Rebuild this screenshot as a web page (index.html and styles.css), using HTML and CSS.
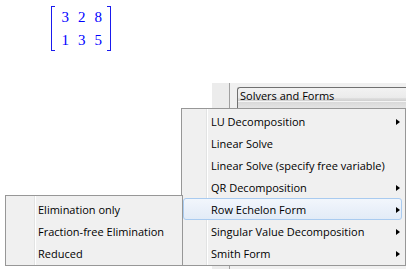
FILE: index.html
```html
<!DOCTYPE html>
<html>
<head>
<meta charset="utf-8">
<link rel="stylesheet" href="styles.css">
</head>
<body>
<div class="app">
  <div class="doc">
    <div class="matrix">
      <div class="bracket bracket-l"></div>
      <div class="cells">
        <span>3</span><span>2</span><span>8</span>
        <span>1</span><span>3</span><span>5</span>
      </div>
      <div class="bracket bracket-r"></div>
    </div>
  </div>
  <div class="panel">
    <div class="panel-strip"></div>
    <div class="panel-body">
      <div class="combo"><div class="combo-label">Solvers and Forms</div></div>
    </div>
  </div>

  <div class="menu main-menu">
    <div class="item has-sub">LU Decomposition<span class="arrow"></span></div>
    <div class="item">Linear Solve</div>
    <div class="item">Linear Solve (specify free variable)</div>
    <div class="item has-sub">QR Decomposition<span class="arrow"></span></div>
    <div class="item has-sub active">Row Echelon Form<span class="arrow"></span></div>
    <div class="item has-sub">Singular Value Decomposition<span class="arrow"></span></div>
    <div class="item has-sub">Smith Form<span class="arrow"></span></div>
  </div>

  <div class="menu sub-menu">
    <div class="item">Elimination only</div>
    <div class="item">Fraction-free Elimination</div>
    <div class="item">Reduced</div>
  </div>
</div>
</body>
</html>
```

FILE: styles.css
```css
html, body {
  margin: 0;
  padding: 0;
  background: #fff;
}

.app {
  position: relative;
  width: 406px;
  height: 269px;
  overflow: hidden;
  display: grid;
  grid-template-columns: 212px 1fr;
  grid-template-rows: 83px 1fr;
  background: #fff;
  font-family: "Open Sans", "Noto Sans", sans-serif;
  font-size: 11px;
  color: #000;
}

/* ---------- document / matrix ---------- */
.doc {
  grid-column: 1;
  grid-row: 1;
  padding: 6px 0 0 51px;
}

.matrix {
  display: flex;
  align-items: stretch;
  color: #0000ff;
  font-family: "Liberation Serif", "Times New Roman", serif;
  font-size: 15px;
}

.bracket {
  width: 3px;
  border: 1px solid #1a1aee;
}
.bracket-l { border-right: 0; }
.bracket-r { border-left: 0; }

.cells {
  display: grid;
  grid-template-columns: repeat(3, 16.5px);
  grid-template-rows: repeat(2, 22.5px);
  line-height: 22.5px;
  justify-items: center;
  margin-left: 2px;
}

/* ---------- right panel ---------- */
.panel {
  grid-column: 2;
  grid-row: 2;
  display: flex;
  background: #f0f0f0;
}
.panel-strip {
  width: 17px;
  border-right: 1px solid #a0a0a0;
  background: #ececec;
}
.panel-body {
  flex: 1;
  padding: 4px 0 0 7px;
}
.combo {
  height: 21px;
  border: 1px solid #707070;
  border-right: 0;
  border-bottom: 0;
  border-radius: 3px 0 0 0;
  background: linear-gradient(#f2f2f2 0, #ebebeb 45%, #dddddd 50%, #cfcfcf 62%, #f4f4f4 63%, #f4f4f4 67%, #d9d9d9 68%, #e6e6e6 100%);
}
.combo-label {
  line-height: 16px;
  padding-left: 2px;
}

/* ---------- menus ---------- */
.menu {
  position: absolute;
  box-sizing: border-box;
  border: 1px solid #979797;
  background-color: #f0f0f0;
  display: flex;
  flex-direction: column;
}

.main-menu {
  left: 181px;
  top: 108px;
  width: 225px;
  height: 158px;
  padding: 1px 3px 2px 1px;
  background-image: linear-gradient(to right, transparent 24px, #e2e3e3 24px, #e2e3e3 25px, #ffffff 25px, #ffffff 26px, transparent 26px);
}

.sub-menu {
  left: 5px;
  top: 195px;
  width: 178px;
  height: 71px;
  padding: 2px 2px 1px 2px;
  background-image: linear-gradient(to right, transparent 28px, #e2e3e3 28px, #e2e3e3 29px, #ffffff 29px, #ffffff 30px, transparent 30px);
}

.item {
  box-sizing: border-box;
  height: 22px;
  line-height: 20px;
  padding-top: 1px;
  display: flex;
  align-items: center;
  white-space: nowrap;
  border: 1px solid transparent;
  border-radius: 3px;
}

.main-menu .item {
  padding-left: 27px;
  padding-right: 1px;
}
.sub-menu .item {
  padding-left: 29px;
}

.item.active {
  border-color: #a9cbf0;
  background: linear-gradient(#f2f6fc, #e2ebf7);
}

.arrow {
  margin-left: auto;
  width: 0;
  height: 0;
  border-left: 4px solid #000;
  border-top: 3.5px solid transparent;
  border-bottom: 3.5px solid transparent;
}
```
